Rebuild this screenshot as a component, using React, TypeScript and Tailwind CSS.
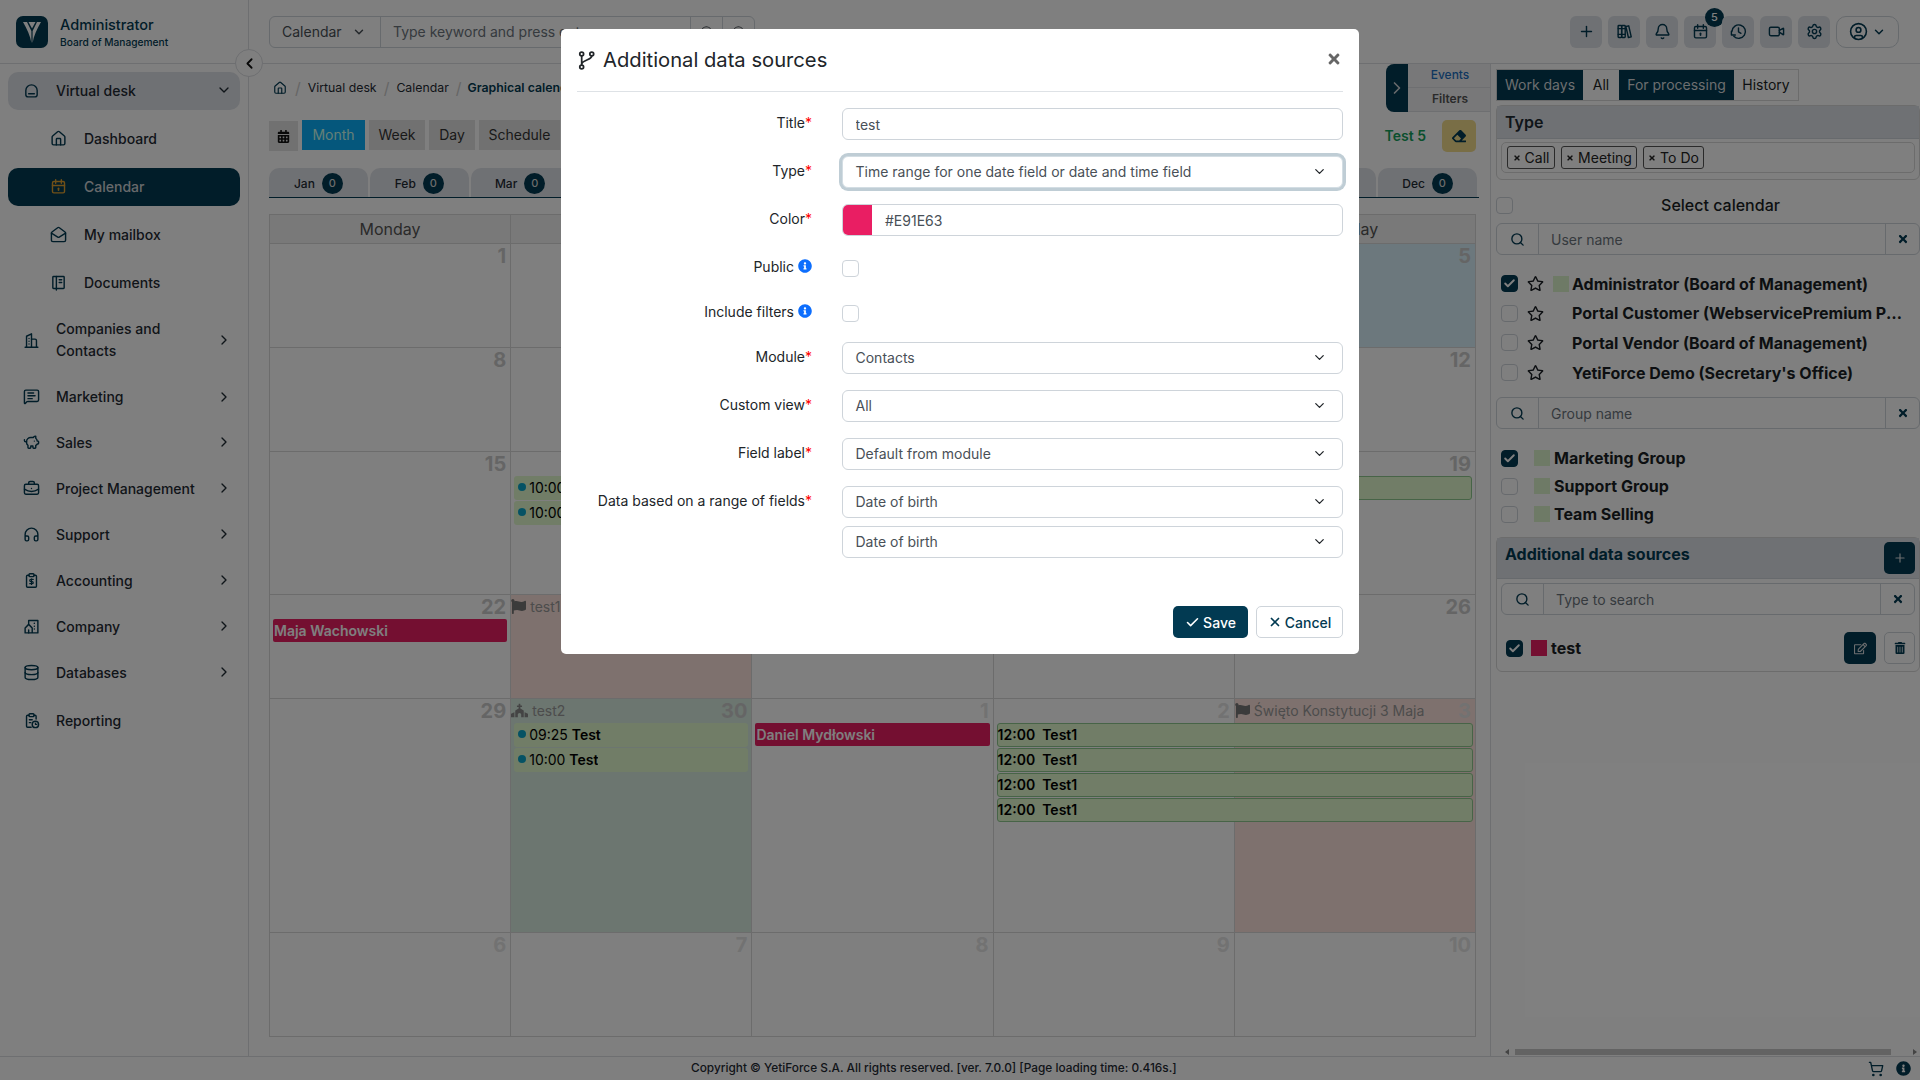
import type { ReactNode } from "react";
import {
  Bell,
  Check,
  ChevronDown,
  ChevronLeft,
  ChevronRight,
  Database,
  Headphones,
  House,
  MailOpen,
  MessageSquareText,
  PiggyBank,
  Plus,
  Search,
  Settings,
  ShoppingCart,
  UserCircle,
  Video,
  X,
  BriefcaseBusiness,
} from "lucide-react";
import {
  FaCalendarAlt,
  FaChurch,
  FaEraser,
  FaFlag,
  FaInfoCircle,
  FaRegEdit,
  FaRegStar,
  FaTimes,
  FaTrashAlt,
} from "react-icons/fa";

// icons that the packages do not have in this shape
function Ico({ size = 17, className = "", children }: { size?: number; className?: string; children: ReactNode }) {
  return (
    <svg
      viewBox="0 0 24 24"
      width={size}
      height={size}
      fill="none"
      stroke="currentColor"
      strokeWidth="2"
      strokeLinecap="round"
      strokeLinejoin="round"
      className={`shrink-0 ${className}`}
    >
      {children}
    </svg>
  );
}

type IconProps = { size?: number; className?: string };

const DeskIcon = (p: IconProps) => (
  <Ico {...p}>
    <path d="M4 12a8 8 0 0 1 16 0v6a3 3 0 0 1-3 3H7a3 3 0 0 1-3-3z" />
    <path d="M8 16.5h8" />
  </Ico>
);
const DayCalendarIcon = (p: IconProps) => (
  <Ico {...p}>
    <rect x="3.5" y="5" width="17" height="16" rx="2" />
    <path d="M8 2.5v5M16 2.5v5M3.5 10.5h17" />
    <path d="M12 14.5v2.5" strokeWidth="2.4" />
  </Ico>
);
const NotebookIcon = (p: IconProps) => (
  <Ico {...p}>
    <path d="M5 3.5h14a1 1 0 0 1 1 1v15a1 1 0 0 1-1 1H5a1 1 0 0 1-1-1v-15a1 1 0 0 1 1-1z" />
    <path d="M9 3.5v19M13 8h3.5M13 12h3.5" />
  </Ico>
);
const TowerIcon = (p: IconProps) => (
  <Ico {...p}>
    <path d="M3 21.5h18" />
    <path d="M5 21V6l7-3.5V21" />
    <path d="M12 10h5a2 2 0 0 1 2 2v9" />
    <path d="M8.5 9v.1M8.5 13v.1M8.5 17v.1" />
  </Ico>
);
const InvoiceIcon = (p: IconProps) => (
  <Ico {...p}>
    <path d="M8.5 4.5H6.5a1.5 1.5 0 0 0-1.5 1.5v14a1.5 1.5 0 0 0 1.5 1.5h11a1.5 1.5 0 0 0 1.5-1.5V6a1.5 1.5 0 0 0-1.5-1.5h-2" />
    <rect x="8.5" y="2.5" width="7" height="4" rx="1.2" />
    <path d="M14.5 10.5h-3.5a1.5 1.5 0 0 0 0 3h2a1.5 1.5 0 0 1 0 3H9.5M12 9.5v8" strokeWidth="1.6" />
  </Ico>
);
const CompanyIcon = (p: IconProps) => (
  <Ico {...p}>
    <path d="M8 9V3.5h13V21H3v-7l5-5 5 5v7" />
    <path d="M8 21v-4M16 7.5v.1M16 11.5v.1M16 15.5v.1" />
  </Ico>
);
const ReportIcon = (p: IconProps) => (
  <Ico {...p}>
    <path d="M8.5 4.5H6.5A1.5 1.5 0 0 0 5 6v14a1.5 1.5 0 0 0 1.5 1.5h5" />
    <path d="M15.5 4.5h1.5A1.5 1.5 0 0 1 18.5 6v4" />
    <rect x="8.5" y="2.5" width="7" height="4" rx="1.2" />
    <path d="M9 11h4M9 15h2" />
    <circle cx="17.5" cy="17.5" r="4.5" />
    <path d="M17.5 15.5v2h2" strokeWidth="1.6" />
  </Ico>
);
const BooksIcon = (p: IconProps) => (
  <Ico {...p}>
    <rect x="3" y="3.5" width="5" height="17" rx="1" />
    <rect x="8" y="3.5" width="5" height="17" rx="1" />
    <path d="M14 5l4-1 3.5 15.5-4 1z" />
    <path d="M3 8h10M3 16h10" strokeWidth="1.6" />
  </Ico>
);
const ClockBackIcon = (p: IconProps) => (
  <Ico {...p}>
    <path d="M3.5 16A9.5 9.5 0 1 0 3.5 8.5" transform="rotate(-20 12 12)" />
    <path d="M2 11.5v5.5h5.5" />
    <path d="M12 7v5.5l3.5 2" />
  </Ico>
);
const BranchIcon = (p: IconProps) => (
  <Ico {...p}>
    <circle cx="6.5" cy="4.5" r="2.2" />
    <circle cx="6.5" cy="19.5" r="2.2" />
    <circle cx="18" cy="4.5" r="2.2" />
    <path d="M6.5 6.7v10.6M18 6.7c0 5.5-11.5 4-11.5 10" />
  </Ico>
);

const navBelow = [
  { label: "Marketing", icon: MessageSquareText, h: "h-[47px]", arrow: true },
  { label: "Sales", icon: PiggyBank, h: "h-[46px] pb-[2px]", arrow: true },
  { label: "Project Management", icon: BriefcaseBusiness, h: "h-[46px] pb-[2px]", arrow: true },
  { label: "Support", icon: Headphones, h: "h-[46px] pb-[2px]", arrow: true },
  { label: "Accounting", icon: InvoiceIcon, h: "h-[46px] pb-[2px]", arrow: true },
  { label: "Company", icon: CompanyIcon, h: "h-[46px] pb-[2px]", arrow: true },
  { label: "Databases", icon: Database, h: "h-[46px] pb-[2px]", arrow: true },
  { label: "Reporting", icon: ReportIcon, h: "h-[50px] pb-[2px]", arrow: false },
];

const months = ["Jan", "Feb", "Mar", "Apr", "May", "Jun", "Jul", "Aug", "Sep", "Oct", "Nov", "Dec"];
const topIcons = [Plus, BooksIcon, Bell, DayCalendarIcon, ClockBackIcon, Video, Settings];
const users = [
  { name: "Administrator (Board of Management)", on: true, color: true },
  { name: "Portal Customer (WebservicePremium Portal Customer)", on: false, color: false },
  { name: "Portal Vendor (Board of Management)", on: false, color: false },
  { name: "YetiForce Demo (Secretary's Office)", on: false, color: false },
];
const groups = [
  { name: "Marketing Group", on: true },
  { name: "Support Group", on: false },
  { name: "Team Selling", on: false },
];

function Logo() {
  return (
    <svg viewBox="0 0 32 32" className="h-8 w-8 shrink-0">
      <rect width="32" height="32" rx="7" fill="#023a52" />
      <path d="M7 6 L11 6 L15.4 15 L15.4 27 C14.4 20 11 13 7 6Z" fill="#fff" />
      <path d="M25 6 L21 6 L16.6 15 L16.6 27 C17.6 20 21 13 25 6Z" fill="#fff" />
      <path d="M12.5 6 L19.5 6 L16 12.5Z" fill="#fff" />
    </svg>
  );
}

function Box({ on, className = "" }: { on?: boolean; className?: string }) {
  return (
    <span
      className={`flex h-[17px] w-[17px] shrink-0 items-center justify-center rounded-[4px] border ${
        on ? "border-[#023a52] bg-[#023a52]" : "border-[#ced4da] bg-white"
      } ${className}`}
    >
      {on && <Check size={13} strokeWidth={3.5} className="text-white" />}
    </span>
  );
}

function SearchBox({ placeholder, className = "" }: { placeholder: string; className?: string }) {
  return (
    <div className={`flex h-8 items-stretch rounded-[6px] border border-[#ced4da] bg-white ${className}`}>
      <span className="flex w-[42px] items-center justify-center border-r border-[#ced4da]">
        <Search size={15} strokeWidth={2.2} className="text-[#023a52]" />
      </span>
      <input
        readOnly
        placeholder={placeholder}
        className="min-w-0 flex-1 bg-transparent px-3 text-[14px] outline-none placeholder:text-[#6c757d]"
      />
      <span className="flex w-[34px] items-center justify-center border-l border-[#ced4da]">
        <FaTimes size={12} className="text-[#023a52]" />
      </span>
    </div>
  );
}

function Sidebar() {
  return (
    <aside className="flex w-[249px] shrink-0 flex-col border-r border-[#dcdee2]">
      <div className="flex h-[64px] shrink-0 items-center gap-3 border-b border-[#dcdee2] pl-4">
        <Logo />
        <div className="pt-[2px]">
          <div className="text-[14.5px] leading-[20px] font-medium text-[#023a52]">Administrator</div>
          <div className="text-[10.2px] leading-[15px] font-medium text-[#023a52]">Board of Management</div>
        </div>
      </div>
      <nav className="flex flex-col px-2 pt-2 text-[14px] font-medium text-[#1f2a33]">
        <div className="flex h-[38px] items-center rounded-[10px] bg-[#dfe2e8] pb-[2px] pl-[15px] pr-[8px]">
          <DeskIcon className="mr-[16px] text-[#023a52]" />
          <span className="flex-1">Virtual desk</span>
          <ChevronDown size={16} />
        </div>
        <div className="mt-[5px] flex h-[48px] items-center pb-[2px] pl-[42px]">
          <House size={17} className="mr-[17px] text-[#023a52]" />
          Dashboard
        </div>
        <div className="mt-[5px] flex h-[38px] items-center rounded-[10px] bg-[#023a52] pb-[1px] pl-[42px] text-[#cfd3d6]">
          <DayCalendarIcon className="mr-[17px] text-[#e0a030]" />
          Calendar
        </div>
        <div className="mt-[5px] flex h-[48px] items-center pb-[2px] pl-[42px]">
          <MailOpen size={17} className="mr-[17px] text-[#023a52]" />
          My mailbox
        </div>
        <div className="flex h-[48px] items-center pb-[2px] pl-[42px]">
          <NotebookIcon className="mr-[17px] text-[#023a52]" />
          Documents
        </div>
        <div className="flex h-[66px] items-center pl-[15px] pr-[8px] leading-[22px]">
          <TowerIcon className="mr-[16px] text-[#023a52]" />
          <span className="flex-1">
            Companies and
            <br />
            Contacts
          </span>
          <ChevronRight size={16} />
        </div>
        {navBelow.map((item) => (
          <div key={item.label} className={`flex items-center pl-[15px] pr-[8px] ${item.h}`}>
            <item.icon size={17} className="mr-[16px] shrink-0 text-[#023a52]" />
            <span className="flex-1">{item.label}</span>
            {item.arrow && <ChevronRight size={16} />}
          </div>
        ))}
      </nav>
    </aside>
  );
}

function Header() {
  return (
    <div className="flex h-[64px] shrink-0 items-center border-b border-[#dcdee2] pl-[20px] pr-[21px]">
      <div className="flex h-8 w-[486px] items-stretch rounded-[6px] border border-[#ced4da] text-[14px] text-[#495057]">
        <span className="flex w-[111px] items-center gap-[10px] border-r border-[#ced4da] pl-3">
          Calendar <ChevronDown size={14} strokeWidth={2.5} />
        </span>
        <span className="flex flex-1 items-center pl-3 text-[#6c757d]">Type keyword and press enter</span>
        <span className="flex w-[32px] items-center justify-center border-l border-[#ced4da]">
          <Search size={14} />
        </span>
        <span className="flex w-[32px] items-center justify-center border-l border-[#ced4da]">
          <Search size={14} />
        </span>
      </div>
      <div className="ml-auto flex items-center gap-[6px]">
        {topIcons.map((Icon, i) => (
          <span key={i} className="relative flex h-8 w-8 items-center justify-center rounded-[6px] bg-[#dfe2e8] text-[#023a52]">
            <Icon size={17} />
            {i === 3 && (
              <span className="absolute -top-[8px] left-[21px] flex h-[19px] w-[19px] items-center justify-center rounded-full bg-[#023a52] text-[11px] font-medium text-white">
                5
              </span>
            )}
          </span>
        ))}
        <span className="flex h-8 w-[63px] items-center justify-center gap-[4px] rounded-[10px] border border-[#ced4da] text-[#023a52]">
          <UserCircle size={19} />
          <ChevronDown size={14} strokeWidth={2.5} />
        </span>
      </div>
    </div>
  );
}

type DayProps = {
  num: number;
  faded?: boolean;
  bg?: string;
  holiday?: ReactNode;
  children?: ReactNode;
};

function Day({ num, faded, bg = "", holiday, children }: DayProps) {
  return (
    <div className={`min-w-0 border-r border-b border-[#d8d8d8] ${bg}`}>
      <div className="flex h-[24px] items-center justify-between pr-[4px] pb-[1px]">
        <span className="flex items-center gap-[4px] text-[14px] text-[#999]">{holiday}</span>
        <span className={`text-[20px] leading-[26px] font-bold ${faded ? "text-[#e4e4e4]" : "text-[#cbcbcb]"}`}>{num}</span>
      </div>
      <div className="flex flex-col gap-[1px]">{children}</div>
    </div>
  );
}

function Dot({ time, title }: { time: string; title: string }) {
  return (
    <div className="mx-[3px] flex h-[24px] items-center rounded-[3px] bg-[#e2fbce] pb-[2px] pl-[4px] text-[14px] text-black">
      <span className="mr-[3px] h-[8px] w-[8px] shrink-0 rounded-full bg-[#0aa5c8]" />
      <span className="truncate">
        {time} <b className="font-semibold">{title}</b>
      </span>
    </div>
  );
}

function Person({ name }: { name: string }) {
  return (
    <div className="mx-[3px] flex h-[23px] items-center rounded-[2px] bg-[#e91e63] pl-[1px] text-[14px] font-semibold text-white">
      {name}
    </div>
  );
}

function WideBar() {
  return (
    <div className="relative z-10 ml-[3px] flex h-[24px] w-[476px] items-center rounded-[3px] border border-[#8fc98f] bg-[#e2fbce] pb-[2px] text-[14px] font-semibold text-black">
      12:00 &nbsp;Test1
    </div>
  );
}

function Calendar() {
  const pink = "bg-[#fde3dc]";
  return (
    <div className="ml-[20px] mt-[16px] grid w-[1207px] grid-cols-5 grid-rows-[29px_104px_104px_143px_104px_234px_104px] border-t border-l border-[#d8d8d8]">
      {["Monday", "Tuesday", "Wednesday", "Thursday", "Friday"].map((d) => (
        <div key={d} className="flex items-center justify-center border-r border-b border-[#d8d8d8] bg-[#f2f2f2] text-[16px] text-[#555]">
          {d}
        </div>
      ))}
      <Day num={1} />
      <Day num={2} />
      <Day num={3} />
      <Day num={4} />
      <Day num={5} bg="bg-[#d9f1fb]" />
      <Day num={8} />
      <Day num={9} />
      <Day num={10} />
      <Day num={11} />
      <Day num={12} />
      <Day num={15} />
      <Day num={16}>
        <Dot time="10:00" title="Test" />
        <Dot time="10:00" title="Test" />
      </Day>
      <Day num={17} />
      <Day num={18} />
      <Day num={19}>
        <div className="mr-[3px] ml-auto h-[24px] w-[235px] rounded-[3px] border border-[#8fc98f] bg-[#e2fbce]" />
      </Day>
      <Day num={22}>
        <Person name="Maja Wachowski" />
      </Day>
      <Day
        num={23}
        bg={pink}
        holiday={
          <>
            <FaFlag size={15} className="text-[#777]" /> test1
          </>
        }
      />
      <Day num={24} />
      <Day num={25} />
      <Day num={26} />
      <Day num={29} />
      <Day
        num={30}
        bg="bg-[#d8ece0]"
        holiday={
          <>
            <FaChurch size={17} className="text-[#888]" /> test2
          </>
        }
      >
        <Dot time="09:25" title="Test" />
        <Dot time="10:00" title="Test" />
      </Day>
      <Day num={1} faded>
        <Person name="Daniel Mydłowski" />
      </Day>
      <Day num={2} faded>
        <WideBar />
        <WideBar />
        <WideBar />
        <WideBar />
      </Day>
      <Day
        num={3}
        faded
        bg={pink}
        holiday={
          <>
            <FaFlag size={15} className="text-[#777]" /> Święto Konstytucji 3 Maja
          </>
        }
      />
      <Day num={6} faded />
      <Day num={7} faded />
      <Day num={8} faded />
      <Day num={9} faded />
      <Day num={10} faded />
    </div>
  );
}

function MainColumn() {
  return (
    <main className="flex w-[1242px] shrink-0 flex-col border-r border-[#dcdee2]">
      <div className="flex h-[48px] shrink-0 items-center pl-[24px]">
        <House size={14} className="mr-[8px] text-[#023a52]" />
        <span className="text-[#ccc]">/</span>
        <span className="mx-[7px] text-[12.3px] text-[#1f2a33]">Virtual desk</span>
        <span className="text-[#ccc]">/</span>
        <span className="mx-[7px] text-[12.3px] text-[#1f2a33]">Calendar</span>
        <span className="text-[#ccc]">/</span>
        <span className="ml-[6px] text-[12.3px] font-semibold text-[#023a52]">Graphical calendar</span>
        <div className="ml-auto flex items-stretch">
          <span className="flex h-[48px] w-[22px] items-center justify-center rounded-l-[8px] bg-[#023a52] text-[#cfd3d6]">
            <ChevronRight size={20} />
          </span>
          <div className="flex w-[82px] flex-col text-center text-[12px] font-medium">
            <span className="flex h-[24px] items-center justify-center border-b border-[#dcdee2] bg-[#f0f1f3] pb-[2px] pl-[2px] text-[#1e6fbf]">Events</span>
            <span className="flex h-[24px] items-center justify-center border-b border-[#dcdee2] bg-[#f0f1f3] pb-[2px] pl-[2px] font-semibold text-[#555]">Filters</span>
          </div>
        </div>
      </div>
      <div className="mt-[8px] flex h-[32px] items-start pl-[20px] pr-[14px] text-[14px] text-[#333]">
        <span className="mr-[4px] mt-[1px] flex h-[30px] w-[29px] items-center justify-center bg-[#e3e3e3] text-[#111]">
          <FaCalendarAlt size={13} />
        </span>
        <span className="mr-[4px] flex h-[30px] w-[63px] items-center justify-center bg-[#0aaef9] pb-[1px] text-[#cfe]">Month</span>
        <span className="mr-[4px] flex h-[30px] w-[56px] items-center justify-center bg-[#e3e3e3] pb-[1px]">Week</span>
        <span className="mr-[4px] flex h-[30px] w-[46px] items-center justify-center bg-[#e3e3e3] pb-[1px]">Day</span>
        <span className="flex h-[30px] w-[81px] items-center justify-center bg-[#e3e3e3] pb-[1px]">Schedule</span>
        <span className="ml-auto mr-[16px] mt-[5px] text-[14px] font-semibold text-[#14a05a]">Test 5</span>
        <span className="flex h-8 w-[34px] items-center justify-center rounded-[5px] bg-[#f2dc8c] text-[#023a52]">
          <FaEraser size={14} />
        </span>
      </div>
      <div className="mt-[16px] ml-[20px] grid w-[1210px] grid-cols-12 gap-[2px] border-b border-[#023a52] pr-[2px]">
        {months.map((m) => (
          <div key={m} className="flex h-[29px] items-center justify-center gap-[7px] rounded-t-[10px] bg-[#dfe2e8] pt-[2px] text-[12px] font-medium text-[#1f2a33]">
            {m}
            <span className="flex h-[21px] w-[21px] items-center justify-center rounded-full bg-[#023a52] text-[11px] text-[#d8d8d8]">0</span>
          </div>
        ))}
      </div>
      <Calendar />
    </main>
  );
}

function Tag({ w, children }: { w: string; children: ReactNode }) {
  return (
    <span className={`flex h-[23px] items-center justify-center gap-[4px] rounded-[3px] border border-[#555] text-[14px] text-[#222] ${w}`}>
      <FaTimes size={8} />
      {children}
    </span>
  );
}

function RightPanel() {
  return (
    <section className="flex min-w-0 flex-1 flex-col pl-[5px] text-[#1a1f24]">
      <div className="mt-[5px] flex h-[32px] w-[303px] border border-[#d8d8d8] text-[14px]">
        <span className="flex w-[86px] items-center justify-center bg-[#023a52] pb-[1px] text-[#d8dcdf]">Work days</span>
        <span className="flex w-[36px] items-center justify-center pb-[1px]">All</span>
        <span className="flex w-[115px] items-center justify-center bg-[#023a52] pb-[1px] text-[#d8dcdf]">For processing</span>
        <span className="flex flex-1 items-center justify-center pb-[1px]">History</span>
      </div>
      <div className="mt-[4px] h-[75px] rounded-[6px] border border-[#d8d8d8]">
        <div className="flex h-[33px] items-center border-b border-[#ced4da] bg-[#dfe2e8] pb-[1px] pl-[8px] text-[16px] font-semibold text-[#1f2a33]">Type</div>
        <div className="mx-[4px] mt-[3px] flex h-[31px] items-center gap-[6px] rounded-[5px] border border-[#d8d8d8] pl-[5px]">
          <Tag w="w-[48px]">Call</Tag>
          <Tag w="w-[76px]">Meeting</Tag>
          <Tag w="w-[61px]">To Do</Tag>
        </div>
      </div>
      <div className="mt-[17px] flex h-[17px] items-center">
        <Box />
        <span className="flex-1 pb-[1px] pl-[8px] text-center text-[16px] font-medium">Select calendar</span>
      </div>
      <SearchBox placeholder="User name" className="mt-[9px]" />
      <div className="mt-[14px] flex flex-col">
        {users.map((u) => (
          <div key={u.name} className="flex h-[29.6px] items-center pl-[5px]">
            <Box on={u.on} />
            <FaRegStar size={17} className="ml-[9px] shrink-0" />
            <span className={`ml-[9px] h-4 w-4 shrink-0 ${u.color ? "bg-[#dcf5cc]" : ""}`} />
            <span className="ml-[3px] min-w-0 truncate pr-[14px] text-[16px] font-bold">{u.name}</span>
          </div>
        ))}
      </div>
      <SearchBox placeholder="Group name" className="mt-[10px]" />
      <div className="mt-[15px] flex flex-col">
        {groups.map((g) => (
          <div key={g.name} className="flex h-[28px] items-center pl-[5px]">
            <Box on={g.on} />
            <span className="ml-[16px] h-4 w-4 shrink-0 bg-[#dcf5cc]" />
            <span className="ml-[4px] text-[16px] font-bold">{g.name}</span>
          </div>
        ))}
      </div>
      <div className="mt-[9px] h-[135px] rounded-[6px] border border-[#d8d8d8]">
        <div className="flex h-[41px] items-center justify-between border-b border-[#ced4da] bg-[#dfe2e8] pl-[8px] pr-[4px] text-[16px] font-bold text-[#023a52]">
          <span className="pb-[8px]">Additional data sources</span>
          <span className="flex h-8 w-[31px] items-center justify-center rounded-[5px] bg-[#023a52] text-[#d8dcdf]">
            <Plus size={14} />
          </span>
        </div>
        <SearchBox placeholder="Type to search" className="mx-[4px] mt-[4px]" />
        <div className="mt-[17px] flex items-center pl-[9px] pr-[4px]">
          <Box on />
          <span className="ml-[8px] h-4 w-4 bg-[#e91e63]" />
          <span className="ml-[4px] flex-1 text-[16px] font-bold">test</span>
          <span className="flex h-8 w-8 items-center justify-center rounded-[5px] bg-[#023a52] text-[#d8dcdf]">
            <FaRegEdit size={13} />
          </span>
          <span className="ml-[8px] flex h-8 w-[31px] items-center justify-center rounded-[5px] border border-[#ced4da] text-[#023a52]">
            <FaTrashAlt size={12} />
          </span>
        </div>
      </div>
      <div className="mt-auto mb-[1px] flex h-[6px] items-center gap-[6px] pl-[9px] pr-[3px]">
        <span className="border-y-[3px] border-r-[4px] border-y-transparent border-r-[#888]" />
        <div className="h-[6px] flex-1 bg-[#c6c6c6]" />
        <span className="ml-[16px] border-y-[3px] border-l-[4px] border-y-transparent border-l-[#888]" />
      </div>
    </section>
  );
}

function Field({ label, required, info, h = "h-8", children }: { label: string; required?: boolean; info?: boolean; h?: string; children?: ReactNode }) {
  return (
    <div className={`mb-4 flex ${h}`}>
      <div className="flex h-[28px] w-[235px] shrink-0 items-center justify-end text-[14px] text-[#212529]">
        {label}
        {required && <span className="text-[#ff0000]">*</span>}
        {info && <FaInfoCircle size={14} className="ml-[4px] text-[#0d6efd]" />}
      </div>
      <div className="ml-[30px] flex-1">{children}</div>
    </div>
  );
}

function Select({ value, focused }: { value: string; focused?: boolean }) {
  return (
    <div
      className={`flex h-8 items-center justify-between rounded-[6px] border bg-white pb-[2px] pl-[12.5px] pr-[15px] text-[14px] text-[#495057] ${
        focused ? "border-[#d3dde3] ring-[3px] ring-[#bfcdd5]" : "border-[#ced4da]"
      }`}
    >
      {value}
      <ChevronDown size={15} strokeWidth={2} className="text-[#212529]" />
    </div>
  );
}

function Modal() {
  return (
    <div className="absolute top-[29px] left-[561px] z-30 h-[625px] w-[798px] rounded-[5px] bg-white px-4 text-[#212529]">
      <div className="flex h-[63px] items-center border-b border-[#dee2e6]">
        <BranchIcon size={21} className="mr-[6px] -ml-[1px]" />
        <span className="flex-1 text-[20.2px]">Additional data sources</span>
        <FaTimes size={16} className="mr-[1px] mb-[3px] text-[#666]" />
      </div>
      <div className="pt-4">
        <Field label="Title" required>
          <input readOnly value="test" className="h-8 w-full rounded-[6px] border border-[#ced4da] pl-[12.5px] text-[14px] text-[#495057] outline-none" />
        </Field>
        <Field label="Type" required>
          <Select value="Time range for one date field or date and time field" focused />
        </Field>
        <Field label="Color" required>
          <div className="flex h-8 items-center overflow-hidden rounded-[6px] border border-[#ced4da] text-[14px] text-[#495057]">
            <span className="h-full w-[29px] bg-[#e91e63]" />
            <span className="pl-[13px]">#E91E63</span>
          </div>
        </Field>
        <Field label="Public" info h="h-[29px]">
          <span className="mt-[8px] block">
            <Box />
          </span>
        </Field>
        <Field label="Include filters" info h="h-[29px]">
          <span className="mt-[8px] block">
            <Box />
          </span>
        </Field>
        <Field label="Module" required>
          <Select value="Contacts" />
        </Field>
        <Field label="Custom view" required>
          <Select value="All" />
        </Field>
        <Field label="Field label" required>
          <Select value="Default from module" />
        </Field>
        <Field label="Data based on a range of fields" required h="h-[72px]">
          <div className="flex flex-col gap-2">
            <Select value="Date of birth" />
            <Select value="Date of birth" />
          </div>
        </Field>
      </div>
      <div className="mt-[48px] flex justify-end gap-[8px] text-[14px]">
        <button className="flex h-8 w-[75px] items-center justify-center gap-[3px] rounded-[5px] bg-[#023a52] font-medium text-white">
          <Check size={15} strokeWidth={2.5} /> Save
        </button>
        <button className="flex h-8 w-[87px] items-center justify-center gap-[3px] rounded-[5px] border border-[#ced4da] font-medium text-[#023a52]">
          <X size={14} strokeWidth={3} /> Cancel
        </button>
      </div>
    </div>
  );
}

export default function App() {
  return (
    <div className="relative flex h-[1080px] w-[1920px] flex-col overflow-hidden bg-white [font-family:Inter,sans-serif]">
      <div className="flex min-h-0 flex-1">
        <Sidebar />
        <div className="flex min-w-0 flex-1 flex-col">
          <Header />
          <div className="flex min-h-0 flex-1">
            <MainColumn />
            <RightPanel />
          </div>
        </div>
      </div>
      <footer className="flex h-[24px] shrink-0 items-center border-t border-[#dcdee2] pl-[691px] pr-[9px] text-[11.85px] font-medium text-[#1f2a33]">
        <span className="flex-1">Copyright © YetiForce S.A. All rights reserved. [ver. 7.0.0] [Page loading time: 0.416s.]</span>
        <ShoppingCart size={16} className="mr-[12px] text-[#023a52]" />
        <FaInfoCircle size={15} className="text-[#023a52]" />
      </footer>
      <span className="absolute top-[49px] left-[235px] flex h-[28px] w-[28px] items-center justify-center rounded-full border border-[#dcdee2] bg-white text-[#111]">
        <ChevronLeft size={17} strokeWidth={2.5} />
      </span>
      <div className="absolute inset-0 z-20 bg-black/50" />
      <Modal />
    </div>
  );
}
